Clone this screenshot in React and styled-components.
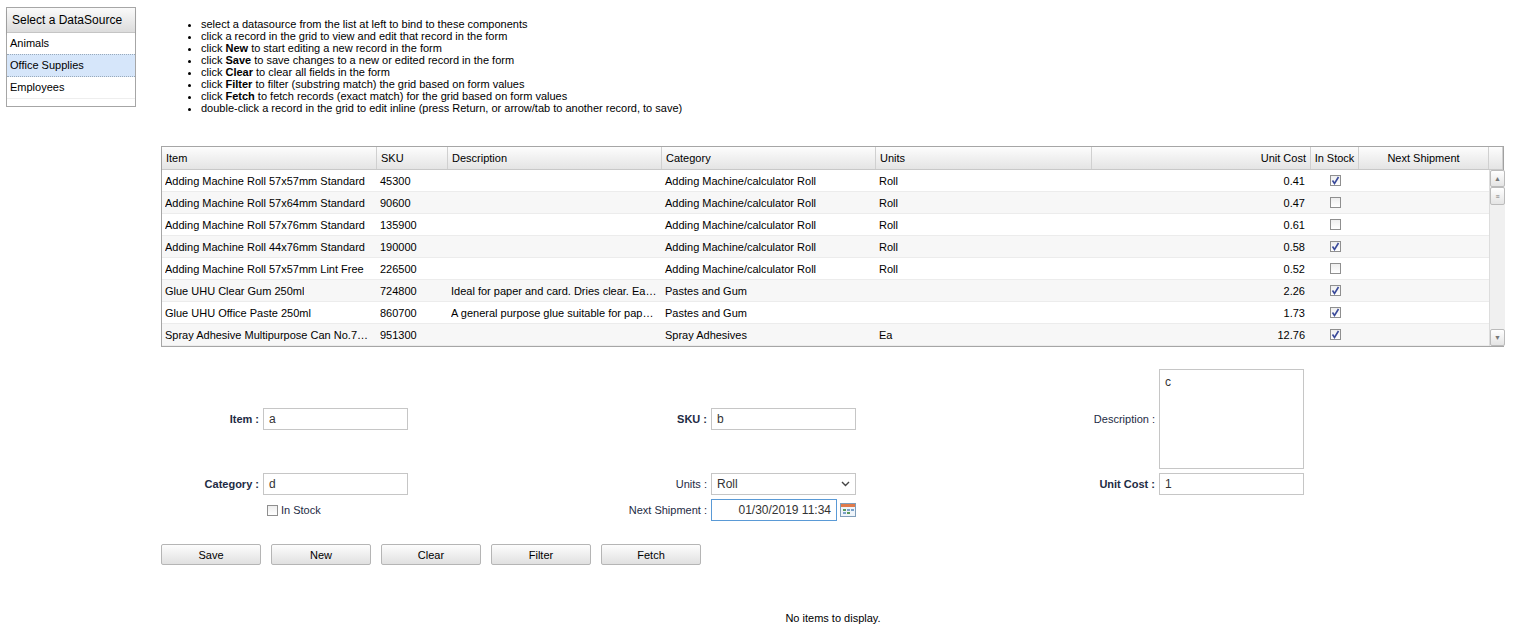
import React from "react";
import styled, { createGlobalStyle } from "styled-components";

const G = createGlobalStyle`
  body{margin:0;font-family:"Liberation Sans",Arial,sans-serif;font-size:11px;color:#000;background:#fff;}
`;
const Top = styled.div`display:flex;align-items:flex-start;padding:7px 0 0 6px;`;
const DSBox = styled.div`width:128px;border:1px solid #a6a6a6;height:98px;`;
const DSHead = styled.div`height:24px;line-height:24px;padding-left:5px;font-size:12px;background:linear-gradient(#fafafa,#dcdcdc);border-bottom:1px solid #c4c4c4;box-shadow:0 2px 2px rgba(0,0,0,.12);`;
const DSRow = styled.div`height:21px;line-height:21px;padding-left:3px;font-size:11px;border-bottom:1px ${p=>p.sel?"dotted #9ab":"solid #eee"};border-top:${p=>p.sel?"1px dotted #9ab":"none"};margin-top:${p=>p.sel?"-1px":"0"};background:${p=>p.sel?"#d6e6fa":"#fff"};`;
const Help = styled.ul`margin:11px 0 0 49px;padding:0 0 0 16px;li{line-height:12px;font-size:11px;} b{font-weight:bold;}`;
const Grid = styled.div`margin:32px 0 0 161px;width:1341px;border:1px solid #a6a6a6;`;
const cols = "215px 71px 214px 214px 216px 219px 48px 130px 14px";
const Head = styled.div`display:grid;grid-template-columns:${cols};height:22px;background:linear-gradient(#fdfdfd,#e4e4e4);border-bottom:1px solid #c8c8c8;box-shadow:0 2px 2px rgba(0,0,0,.1);`;
const HCell = styled.div`display:flex;align-items:center;justify-content:${p=>p.a||"flex-start"};padding:0 ${p=>p.a==="center"?"0":"4px"};white-space:nowrap;overflow:hidden;border-right:1px solid #d0d0d0;font-size:11px;`;
const Body = styled.div`display:flex;`;
const Rows = styled.div`flex:1;`;
const Row = styled.div`display:grid;grid-template-columns:215px 71px 214px 214px 216px 219px 48px 130px;height:21px;border-bottom:1px solid #ececec;background:${p=>p.alt?"#f7f7f7":"#fff"};`;
const Cell = styled.div`display:flex;align-items:center;justify-content:${p=>p.a||"flex-start"};padding:0 ${p=>p.a==="flex-end"?"6px":"3px"} 0 3px;white-space:nowrap;overflow:hidden;font-size:11px;min-width:0;span{overflow:hidden;text-overflow:ellipsis;}`;
const Scroll = styled.div`width:15px;border-left:1px solid #ddd;background:#f0f0f0;display:flex;flex-direction:column;align-items:center;`;
const SBtn = styled.div`width:13px;height:${p=>p.h||15}px;border:1px solid #bbb;border-radius:2px;background:linear-gradient(#fff,#e4e4e4);font-size:7px;color:#777;display:flex;align-items:center;justify-content:center;`;
const Spacer = styled.div`flex:1;`;
const Box = styled.span`width:11px;height:11px;border:1px solid #8f8f8f;background:linear-gradient(#eee,#fff);display:inline-flex;align-items:center;justify-content:center;box-sizing:border-box;`;
const Check = ({on}) => <Box>{on ? <svg width="9" height="9" viewBox="0 0 9 9"><path d="M1.5 4.5 L3.5 7.5 L7.5 1" stroke="#3a4a9a" strokeWidth="1.6" fill="none"/></svg> : null}</Box>;
const Form = styled.div`margin:22px 0 0 161px;display:grid;grid-template-columns:102px 145px 303px 145px 303px 145px;grid-template-rows:100px 22px 22px;row-gap:4px;align-items:center;`;
const Label = styled.div`text-align:right;padding-right:4px;font-size:11px;font-weight:${p=>p.b?"bold":"normal"};color:#1d2b44;`;
const Input = styled.div`height:22px;box-sizing:border-box;border:1px solid ${p=>p.focus?"#5a9ad6":"#c6c6c6"};display:flex;align-items:center;padding:0 5px;font-size:12px;color:#333;justify-content:${p=>p.r?"flex-end":"space-between"};`;
const Area = styled.div`height:100px;box-sizing:border-box;border:1px solid #c6c6c6;padding:5px;font-size:12px;color:#333;`;
const Stock = styled.div`display:flex;align-items:center;gap:3px;padding-left:4px;font-size:11px;color:#1d2b44;`;
const DateWrap = styled.div`display:flex;align-items:center;gap:3px;`;
const Buttons = styled.div`display:flex;gap:10px;margin:23px 0 0 161px;`;
const Btn = styled.div`width:98px;height:19px;border:1px solid #b5b5b5;border-radius:2px;background:linear-gradient(#fdfdfd,#e0e0e0);display:flex;align-items:center;justify-content:center;font-size:11px;`;
const Empty = styled.div`text-align:center;margin-top:47px;padding-left:148px;font-size:11px;`;

const data = [
["Adding Machine Roll 57x57mm Standard","45300","","Adding Machine/calculator Roll","Roll","0.41",1],
["Adding Machine Roll 57x64mm Standard","90600","","Adding Machine/calculator Roll","Roll","0.47",0],
["Adding Machine Roll 57x76mm Standard","135900","","Adding Machine/calculator Roll","Roll","0.61",0],
["Adding Machine Roll 44x76mm Standard","190000","","Adding Machine/calculator Roll","Roll","0.58",1],
["Adding Machine Roll 57x57mm Lint Free","226500","","Adding Machine/calculator Roll","Roll","0.52",0],
["Glue UHU Clear Gum 250ml","724800","Ideal for paper and card. Dries clear. Easy to use","Pastes and Gum","","2.26",1],
["Glue UHU Office Paste 250ml","860700","A general purpose glue suitable for paper and card","Pastes and Gum","","1.73",1],
["Spray Adhesive Multipurpose Can No.76 Large","951300","","Spray Adhesives","Ea","12.76",1],
];

export default function App(){
  return <>
    <G/>
    <Top>
      <DSBox>
        <DSHead>Select a DataSource</DSHead>
        <DSRow>Animals</DSRow>
        <DSRow sel>Office Supplies</DSRow>
        <DSRow>Employees</DSRow>
      </DSBox>
      <Help>
        <li>select a datasource from the list at left to bind to these components</li>
        <li>click a record in the grid to view and edit that record in the form</li>
        <li>click <b>New</b> to start editing a new record in the form</li>
        <li>click <b>Save</b> to save changes to a new or edited record in the form</li>
        <li>click <b>Clear</b> to clear all fields in the form</li>
        <li>click <b>Filter</b> to filter (substring match) the grid based on form values</li>
        <li>click <b>Fetch</b> to fetch records (exact match) for the grid based on form values</li>
        <li>double-click a record in the grid to edit inline (press Return, or arrow/tab to another record, to save)</li>
      </Help>
    </Top>
    <Grid>
      <Head>
        <HCell>Item</HCell><HCell>SKU</HCell><HCell>Description</HCell><HCell>Category</HCell><HCell>Units</HCell>
        <HCell a="flex-end">Unit Cost</HCell><HCell a="center">In Stock</HCell><HCell a="center">Next Shipment</HCell><HCell/>
      </Head>
      <Body>
        <Rows>
          {data.map((r,i)=><Row key={i} alt={i%2===1}>
            <Cell><span>{r[0]}</span></Cell><Cell>{r[1]}</Cell><Cell><span>{r[2]}</span></Cell><Cell>{r[3]}</Cell><Cell>{r[4]}</Cell>
            <Cell a="flex-end">{r[5]}</Cell><Cell a="center"><Check on={!!r[6]}/></Cell><Cell/>
          </Row>)}
        </Rows>
        <Scroll><SBtn>▲</SBtn><SBtn h={16}>≡</SBtn><Spacer/><SBtn>▼</SBtn></Scroll>
      </Body>
    </Grid>
    <Form>
      <Label b>Item :</Label><Input>a</Input>
      <Label b>SKU :</Label><Input>b</Input>
      <Label>Description :</Label><Area>c</Area>
      <Label b>Category :</Label><Input>d</Input>
      <Label>Units :</Label><Input>Roll<svg width="9" height="6" viewBox="0 0 9 6"><path d="M1 1l3.5 3.5L8 1" stroke="#444" strokeWidth="1.4" fill="none"/></svg></Input>
      <Label b>Unit Cost :</Label><Input>1</Input>
      <div/><Stock><Check/>In Stock</Stock>
      <Label>Next Shipment :</Label>
      <DateWrap><Input focus r style={{width:126}}>01/30/2019 11:34</Input>
        <svg width="16" height="14" viewBox="0 0 16 14"><rect x="0.5" y="0.5" width="15" height="13" fill="#eef4fa" stroke="#7f9db9"/><rect x="1" y="1" width="14" height="3" fill="#e07a4a"/><rect x="3" y="6" width="3" height="2" fill="#5a9a5a"/><rect x="7" y="6" width="3" height="2" fill="#7aa0c8"/><rect x="11" y="6" width="3" height="2" fill="#7aa0c8"/><rect x="3" y="9" width="3" height="2" fill="#7aa0c8"/><rect x="7" y="9" width="3" height="2" fill="#5a9a5a"/></svg>
      </DateWrap>
    </Form>
    <Buttons>{["Save","New","Clear","Filter","Fetch"].map(b=><Btn key={b}>{b}</Btn>)}</Buttons>
    <Empty>No items to display.</Empty>
  </>;
}
